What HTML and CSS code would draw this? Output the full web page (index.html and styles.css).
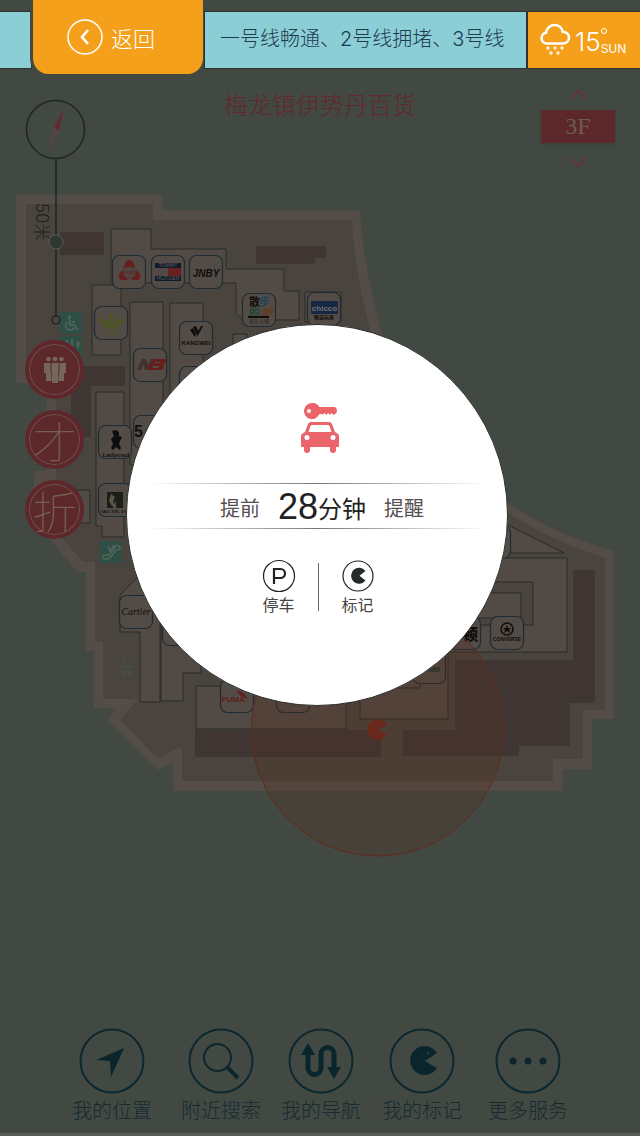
FILE: index.html
```html
<!DOCTYPE html>
<html lang="zh-CN">

<head>
    <meta charset="UTF-8" />
    <meta name="viewport" content="width=device-width, initial-scale=1.0" />
    <title>梅龙镇伊势丹百货</title>
    <link rel="stylesheet" href="styles.css">
</head>

<body>
    <header class="topbar">
        <span class="topbar-edge"></span>
        <button class="back" type="button">
            <svg width="38" height="38" viewBox="0 0 38 38" fill="none" stroke="#fff">
                <circle cx="19" cy="19" r="17" stroke-width="1.5" />
                <path d="M22 12l-6 7 6 7" stroke-width="2.6" />
            </svg>
            返回
        </button>
        <div class="ticker">一号线畅通、2号线拥堵、3号线</div>
        <div class="weather">
            <svg width="32" height="34" viewBox="0 0 32 34" fill="none" stroke="#fff">
                <path d="M8 20.500a5.500 5.500 0 0 1-1-10.900C8 5 11.500 2 15.500 2c4 0 7.500 2.600 8.200 6.600 3.600.2 6.300 2.700 6.300 6 0 3.400-2.700 5.900-6 5.900z" stroke-width="2.600" />
                <path d="M9 23v4M7 25h4M16 23v4M14 25h4M23 23v4M21 25h4M12 28v4M10 30h4M19 28v4M17 30h4" stroke-width="1.200" />
            </svg>
            <span class="temp">15</span>
            <span class="unit"><span class="degree"></span>SUN</span>
        </div>
    </header>

    <main class="stage">
        <svg class="map" viewBox="0 80 640 870">
            <defs>
                <rect id="tile" x="-16.500" y="-16.500" width="33" height="33" rx="7" />
            </defs>

            <!-- building -->
            <path class="wall" d="M16 195H162V210L360 211Q364 270 382 333L508 503Q560 537 614 551V719H592V769H563V791H173V762L158 770 107 720 116 708H94V651H86V572H77L34 520V471H47V383H16z" />
            <path class="floor" d="M26 204H153V220H352Q355 275 371 333L508 513Q550 540 605 558V710H583V759H553V781H182V746L158 759 120 720 138 699H103V642H95V562H83L52 526V480H56V374H26z" />

            <g class="block">
                <path d="M60 232h44v23H60z" />
                <path d="M256 246h70v12h-11v6h-59z" />
                <path d="M71 366h54v20H91v51H71z" />
                <path d="M573 570h22v133h-25v43h-51v10H403v-26h52v-70h118z" />
                <path d="M195 730h186v27H195z" />
            </g>

            <g class="room">
                <path d="M111 229h40v20h75v20h58v22h15v29h-56l-7-7v-30H111z" />
                <path d="M92 285h29v70H92z" />
                <path d="M130 302h33v163h-33z" />
                <path d="M170 303h33v130h-33z" />
                <path d="M305 292h36v30h-36z" />
                <path d="M233 334h14v20h-14z" />
                <path d="M96 392h28v145h-22v-11h-6z" />
                <path d="M66 490h24v33H66z" />
                <path d="M120 595l40-40v147h-20v-70h-20z" />
                <path d="M161 600h40v73h-18v28h-22z" />
                <path d="M196 686h150v43H196z" />
                <path d="M360 650h88v69h-88z" />
                <path d="M500 521l64 32h-64z" />
                <path d="M460 558h107v94H440z" />
                <path class="floor" d="M478 582h55v43h-63z" />
                <path d="M470 593h51v25h-51z" />
                <path d="M370 680h50v8h-50z" />
            </g>

            <!-- service points -->
            <g class="service">
                <rect x="60" y="312" width="22" height="22" rx="3" />
                <rect x="60" y="336" width="22" height="22" rx="3" />
                <rect x="100" y="541" width="22" height="22" rx="3" />
            </g>
            <g class="service-mark">
                <circle cx="69.500" cy="317" r="1" />
                <path d="M69.500 319v6h5l3 5M71 322h4M67.500 322a4.500 4.500 0 1 0 6.500 6" />
                <path d="M67 340v6M72 339v16M78 341v7M76 344h4" />
                <path d="M104 559c-2-2-1-4 1-4h4l6-8c1-2 5-2 5 1 0 2-2 2-4 2l-6 8c-1 1-4 1-6 1zM108 546l2 5 4-6" />
            </g>
            <g class="restroom">
                <circle cx="124" cy="661" r="2" />
                <circle cx="131" cy="661" r="2" />
                <path d="M120 665h14v3h-14zM121 670h5v6h-5zM128 670h5v6h-5z" />
            </g>

            <!-- shops -->
            <g class="tiles">
                <use href="#tile" x="129" y="272" />
                <use href="#tile" x="168" y="272" />
                <use href="#tile" x="206" y="272" />
                <use href="#tile" x="111" y="323" />
                <use href="#tile" x="150" y="365" />
                <use href="#tile" x="196" y="338" />
                <use href="#tile" x="196" y="383" />
                <use href="#tile" x="259" y="310" />
                <use href="#tile" x="324" y="309" />
                <use href="#tile" x="115" y="442" />
                <use href="#tile" x="150" y="432" />
                <use href="#tile" x="115" y="500" />
                <use href="#tile" x="136" y="612" />
                <use href="#tile" x="179" y="629" />
                <use href="#tile" x="237" y="696" />
                <use href="#tile" x="293" y="696" />
                <use href="#tile" x="429" y="667" />
                <use href="#tile" x="464" y="633" />
                <use href="#tile" x="507" y="633" />
                <use href="#tile" x="494" y="542" />
            </g>

            <g class="logo-red">
                <path d="M129.500 260c4 0 5 5 6 9 4 4 6 7 4 10-2 2-6 1-10 0-4 1-8 2-10 0-2-3 0-6 4-10 1-4 2-9 6-9z" />
            </g>
            <path class="logo-cut" d="M122 269q7.500-4 15 0-1 8-7.500 10-6.500-2-7.500-10z" />
            <text class="tiny red" x="129.500" y="274">kappa</text>

            <path fill="#101a2c" d="M155 263h26v5h-26zM155 276h26v5h-26z" />
            <path fill="#524a46" d="M155 268h13v8h-13z" />
            <path fill="#68211e" d="M168 268h13v8h-13z" />
            <text class="tiny pale" x="168" y="267">TOMMY</text>
            <text class="tiny pale" x="168" y="280">HILFIGER</text>

            <text class="logo-hand" x="206" y="277">JNBY</text>

            <g fill="#4f5725">
                <path d="M111 313q5 6 0 13-5-7 0-13zM98 318q9 0 11 9-8 0-11-9zM124 318q-9 0-11 9 8 0 11-9z" />
                <path d="M103 324h16l-1 2h-14zM104 327h14l-1 1h-12zM105 329h12l-1 1h-10z" />
            </g>
            <text class="tiny olive" x="111" y="334">adidas</text>

            <path fill="#46302d" d="M137 370l5-11h4l2 6 3-6h3l-5 11h-4l-2-6-2 6z" />
            <path fill="#681f1c" d="M148 370l5-11h11q3 1 2 3-1 2-3 2 2 2 1 3-1 3-4 3zM155 362l-1 1h6v-1zM153 366l-1 2h7v-2z" />

            <path fill="#100e0d" d="M190 330l3-2 3 6-1 3zM193 327l3-1 2 5-1 4zM197 333l4-7h2l-6 11z" />
            <text class="small" x="196" y="345">KANGWEI</text>

            <text class="shop-cn" x="249" y="306">散</text>
            <text class="shop-cn blue" x="259" y="306">步</text>
            <text class="shop-cn green" x="249" y="317">的</text>
            <path fill="#5d3f2b" d="M261 316l3-8q5 2 8-3l2 6q-3 5-7 3l-1 3z" />
            <path fill="#100e0d" d="M248 316h21v2h-21z" />
            <text class="tiny" x="259" y="323">其乐小铺</text>

            <path fill="#152743" d="M311 301h27v13h-27z" />
            <text class="chicco" x="324.500" y="311">chicco</text>
            <text class="tiny bold" x="324" y="319">智高玩具</text>

            <path fill="#100e0d" d="M112 431l4-1 3 2v4l3 1-2 4-1 3 2 4-1 2-4-3-3 3-2-2 2-4-2-5 3-3z" />
            <text class="tiny bold wide" x="116" y="457">Ladysoul</text>
            <text class="five" x="134" y="437">5</text>

            <path fill="#1c1f17" d="M107 492h16v16h-7v-8l-3 8h-6z" />
            <path fill="#5c574c" d="M111 494l4 3-2 5 4 5-5-1-3-5z" />
            <text class="tiny bold serif" x="116" y="513">ARCTIC FOX</text>

            <text class="cartier" x="136" y="615">Cartier</text>

            <text class="puma" x="233" y="702">PUMA</text>
            <path fill="#621e1a" d="M236 691q6 0 8 3l4 5-7-3z" />

            <text class="shop-bold" x="470" y="640">顿</text>
            <path fill="#2d3c38" d="M428 667h12v5h-12z" />
            <circle cx="507" cy="629" r="6" fill="none" stroke="#100e0d" stroke-width="1.500" />
            <path fill="#100e0d" d="M507 625l1 3h3l-2 2 1 3-3-2-3 2 1-3-2-2h3z" />
            <text class="tiny bold" x="507" y="641">CONVERSE</text>

            <!-- current position -->
            <circle class="range" cx="377.500" cy="730" r="126" />
            <path fill="#6b291e" d="M387 724a10.500 10.500 0 1 0 0 11l-8-5z" />

            <!-- compass and scale -->
            <g class="compass">
                <circle cx="55.500" cy="129.500" r="29" />
                <path d="M56 159v157" />
                <circle cx="56" cy="320" r="4" />
            </g>
            <path fill="#6a282e" d="M64 108l-5 22-5-2z" />
            <path fill="#5a4244" d="M48 152l6-24 5 2z" />
            <circle cx="56" cy="242" r="7" fill="#303632" stroke="#5d5b55" />
            <text class="scale-text" transform="translate(36 203) rotate(90)">50米</text>
        </svg>

        <h1 class="mall">梅龙镇伊势丹百货</h1>

        <div class="floors">
            <button class="step" type="button" aria-label="上一层">
                <svg width="18" height="10" viewBox="0 0 18 10"><path d="M1 9l8-8 8 8" /></svg>
            </button>
            <span class="current">3F</span>
            <button class="step" type="button" aria-label="下一层">
                <svg width="18" height="10" viewBox="0 0 18 10"><path d="M1 1l8 8 8-8" /></svg>
            </button>
        </div>

        <div class="side">
            <button class="round people" type="button" aria-label="人群">
                <svg width="24" height="28" viewBox="0 0 24 28">
                    <circle cx="5.500" cy="3" r="2.300" />
                    <circle cx="18.500" cy="3" r="2.300" />
                    <circle cx="12" cy="3" r="2.300" />
                    <path d="M1 7h6.500v10l1 2v6H3v-8H1zM16.500 7H23v10h-2v8h-5.500v-6l1-2zM8.500 7h7v10H15v10H9V17h-.5z" />
                </svg>
            </button>
            <button class="round" type="button">才</button>
            <button class="round" type="button">折</button>
        </div>

        <section class="dialog" role="dialog" aria-label="停车提醒">
            <svg class="car" width="38" height="50" viewBox="0 0 38 50">
                <path fill-rule="evenodd" d="M11 0a8 8 0 0 1 7.400 4H34q2 1 2 3.500T34 11l-1.500 1-2-2-1.500 2-2-2-1.500 2-2-2-1.500 1.500-2-.5h-1.600A8 8 0 1 1 11 0zM8 6a2 2 0 1 0 0 4 2 2 0 0 0 0-4z" />
                <path fill-rule="evenodd" d="M10 19h18q2 0 3 2l3 8q4 2 4 4v11h-3v3q0 3-3 3t-3-3v-3H9v3q0 3-3 3t-3-3v-3H0V33q0-2 4-4l3-8q1-2 3-2zm1 3q-1 0-1.500 1L7.500 29h23l-2-6q-.5-1-1.500-1zM6 32a2.500 2.500 0 1 0 0 5 2.500 2.500 0 0 0 0-5zm26 0a2.500 2.500 0 1 0 0 5 2.500 2.500 0 0 0 0-5z" />
            </svg>
            <p class="remind">
                <span>提前</span>
                <strong><span class="minutes">28</span>分钟</strong>
                <span>提醒</span>
            </p>
            <div class="choices">
                <button class="choice" type="button">
                    <svg width="34" height="34" viewBox="0 0 34 34" fill="none" stroke="#222">
                        <circle cx="17" cy="17" r="15.500" stroke-width="1.200" />
                        <path d="M12 25V10h6.500a4.500 4.500 0 0 1 0 9H12" stroke-width="2.200" />
                    </svg>
                    停车
                </button>
                <span class="divider"></span>
                <button class="choice" type="button">
                    <svg width="34" height="34" viewBox="0 0 34 34">
                        <circle cx="17" cy="17" r="15" fill="none" stroke="#222" stroke-width="1.200" />
                        <path fill="#262a2a" d="M24.500 12a8 8 0 1 0 0 9.500l-6-4.700z" />
                    </svg>
                    标记
                </button>
            </div>
        </section>
    </main>

    <nav class="tabs">
        <a class="tab" href="#location">
            <svg viewBox="0 0 66 66">
                <circle class="ring" cx="33" cy="33" r="31.500" />
                <path d="M45 20L32 49l-1-16-14-1z" />
            </svg>
            我的位置
        </a>
        <a class="tab" href="#search">
            <svg viewBox="0 0 66 66">
                <circle class="ring" cx="33" cy="33" r="31.500" />
                <circle class="ring" cx="29.500" cy="29.500" r="13.500" />
                <path class="ring thick" d="M39 39l11 11" />
            </svg>
            附近搜索
        </a>
        <a class="tab" href="#route">
            <svg viewBox="0 0 66 66">
                <circle class="ring" cx="33" cy="33" r="31.500" />
                <path class="route" d="M20 24v16a6.500 6.500 0 0 0 13 0V26a6.500 6.500 0 0 1 13 0v16" />
                <path d="M13 27l7-12 7 12zM39 39h14l-7 12z" />
            </svg>
            我的导航
        </a>
        <a class="tab" href="#marks">
            <svg viewBox="0 0 66 66">
                <circle class="ring" cx="33" cy="33" r="31.500" />
                <path fill-rule="evenodd" d="M48 25a14.500 14.500 0 1 0 0 15l-12-7zM39 24a1 1 0 1 0 0 2 1 1 0 0 0 0-2z" />
            </svg>
            我的标记
        </a>
        <a class="tab" href="#more">
            <svg viewBox="0 0 66 66">
                <circle class="ring" cx="33" cy="33" r="31.500" />
                <circle cx="18" cy="33" r="3.500" />
                <circle cx="33" cy="33" r="3.500" />
                <circle cx="48" cy="33" r="3.500" />
            </svg>
            更多服务
        </a>
    </nav>
</body>

</html>
```
FILE: styles.css
```css
* {
    box-sizing: border-box;
}

body {
    display: flex;
    flex-direction: column;
    min-height: 100vh;
    margin: 0;
    background: #424942;
    font-family: "Noto Sans CJK SC", sans-serif;
    font-weight: 300;
}

button {
    padding: 0;
    border: 0;
    background: none;
    color: inherit;
    font: inherit;
    cursor: pointer;
}

/* top bar */
.topbar {
    display: flex;
    align-items: flex-start;
    height: 80px;
}

.topbar-edge,
.ticker,
.weather {
    height: 58px;
    margin-top: 11px;
    border: 1px solid #2c3330;
    background: #8bced6;
}

.topbar-edge {
    width: 32px;
    border-left: 0;
}

.back {
    display: flex;
    align-items: center;
    gap: 7px;
    width: 176px;
    height: 76px;
    margin: 0 -2px;
    padding-left: 33px;
    border: solid #424942;
    border-width: 0 3px 2px;
    border-radius: 0 0 18px 18px;
    background: #f4a01b;
    color: #fff;
    font-size: 22px;
}

.ticker {
    flex: 1;
    padding-left: 15px;
    color: #1d3a50;
    font-family: Inter, "Noto Sans CJK SC", sans-serif;
    font-size: 20px;
    line-height: 54px;
    white-space: nowrap;
    overflow: hidden;
}

.weather {
    display: flex;
    align-items: center;
    gap: 4px;
    width: 113px;
    padding-left: 11px;
    border-right: 0;
    background: #f4a01b;
    color: #fff;
}

.temp {
    padding-top: 4px;
    font: 300 26px/32px Inter, sans-serif;
}

.unit {
    display: flex;
    flex-direction: column;
    gap: 8px;
    margin-left: -4px;
    padding-top: 4px;
    font: 12px/14px Inter, sans-serif;
}

.degree {
    width: 6px;
    height: 6px;
    border: 1px solid #fff;
    border-radius: 50%;
}

/* map */
.stage {
    display: grid;
    position: relative;
}

.stage > * {
    grid-area: 1 / 1;
}

.map {
    display: block;
    width: 100%;
}

.wall {
    fill: #544c47;
}

.floor,
.room .floor {
    fill: #49443e;
}

.block {
    fill: #3f3634;
}

.room {
    fill: #524a45;
    stroke: #2b2a26;
    stroke-width: 1;
}

.service {
    fill: #2d4f45;
}

.service-mark {
    fill: none;
    stroke: #55675d;
    stroke-width: 1.5;
}

.restroom {
    fill: #474b45;
}

.tiles {
    fill: #534b46;
    stroke: #1f2c34;
    stroke-width: 1.2;
}

.logo-red {
    fill: #651f1f;
}

.logo-cut {
    fill: #4e4642;
}

.map text {
    fill: #100e0d;
    text-anchor: middle;
    font-family: "Liberation Sans", "Noto Sans CJK SC", sans-serif;
}

.map .tiny {
    font-size: 5px;
}

.map .small {
    font-size: 6px;
    font-weight: 700;
}

.map .bold {
    font-weight: 700;
}

.map .wide {
    font-size: 6px;
}

.map .serif {
    font-family: "Liberation Serif", serif;
}

.map .red {
    fill: #651f1f;
}

.map .pale {
    fill: #665f5a;
}

.map .olive {
    fill: #4f5725;
}

.map .logo-hand {
    font-size: 10px;
    font-weight: 700;
    font-style: italic;
}

.map .shop-cn {
    text-anchor: start;
    font-size: 11px;
    font-weight: 700;
}

.map .blue {
    fill: #234257;
}

.map .green {
    fill: #24432f;
}

.map .chicco {
    fill: #777371;
    font-size: 8px;
    font-weight: 700;
}

.map .five {
    text-anchor: start;
    font-size: 16px;
    font-weight: 700;
}

.map .cartier {
    font: italic 10px "Liberation Serif", serif;
}

.map .puma {
    fill: #621e1a;
    font-size: 8px;
    font-weight: 700;
}

.map .shop-bold {
    font-size: 16px;
    font-weight: 900;
}

.range {
    fill: rgba(88, 43, 25, 0.25);
    stroke: #64281d;
}

.compass {
    fill: none;
    stroke: #202622;
    stroke-width: 1.6;
}

.map .scale-text {
    fill: #211f1c;
    text-anchor: start;
    font: 300 17px Inter, "Noto Sans CJK SC", sans-serif;
}

.mall {
    justify-self: center;
    align-self: start;
    margin: 6px 0 0;
    color: #63272d;
    font-size: 24px;
    font-weight: 300;
    line-height: 36px;
}

.floors {
    display: flex;
    flex-direction: column;
    justify-self: end;
    align-self: start;
    align-items: center;
    gap: 10px;
    margin: 10px 25px 0 0;
}

.step {
    display: flex;
}

.step path {
    fill: none;
    stroke: #702c35;
    stroke-width: 1.5;
}

.current {
    width: 74px;
    background: #5d282b;
    box-shadow: 0 2px 4px rgba(0, 0, 0, 0.12);
    color: #6b5c52;
    font: 24px/33px "Liberation Serif", serif;
    text-align: center;
}

.step:last-child {
    margin-top: 4px;
}

.side {
    display: flex;
    flex-direction: column;
    justify-self: start;
    align-self: start;
    gap: 11px;
    margin: 260px 0 0 25px;
}

.round {
    width: 59px;
    height: 59px;
    border: 4px solid #5f272c;
    border-radius: 50%;
    background: #5c282b;
    box-shadow: inset 0 0 0 1px #6e594d;
    color: #75604f;
    font-size: 44px;
    font-weight: 100;
    line-height: 50px;
}

.people {
    line-height: 0;
}

.people svg {
    fill: #75665c;
}

/* reminder dialog */
.dialog {
    display: flex;
    flex-direction: column;
    place-self: center;
    align-items: center;
    width: 382px;
    height: 382px;
    margin-right: 6px;
    padding-top: 78px;
    border: 1px solid #2b302c;
    border-radius: 50%;
    background: #fff;
    color: #555050;
}

.car {
    margin-left: 6px;
    fill: #ea6469;
}

.remind {
    display: flex;
    justify-content: center;
    align-items: center;
    gap: 18px;
    width: 340px;
    height: 46px;
    margin: 30px 0 0;
    padding: 2px 0 0 10px;
    background:
        linear-gradient(90deg, #fff, #777, #fff) top / 100% 1px no-repeat,
        linear-gradient(90deg, #fff, #777, #fff) bottom / 100% 1px no-repeat;
    font-size: 20px;
    font-weight: 400;
}

.remind strong {
    display: flex;
    align-items: center;
    color: #222;
    font-size: 24px;
    font-weight: 400;
}

.minutes {
    font-family: "Liberation Sans", sans-serif;
    font-size: 36px;
    line-height: 40px;
}

.choices {
    display: flex;
    align-items: center;
    margin-top: 30px;
    padding-left: 2px;
}

.choice {
    display: flex;
    flex-direction: column;
    align-items: center;
    width: 78px;
    color: #444;
    font-size: 16px;
    font-weight: 400;
    line-height: 22px;
}

.divider {
    width: 1px;
    height: 48px;
    background: #666;
}

/* bottom tabs */
.tabs {
    display: grid;
    flex: 1;
    grid-template-columns: 112fr 106fr 94fr 108fr 104fr;
    align-items: end;
    padding: 0 60px 7px 56px;
    border-bottom: 3px solid #595b57;
}

.tab {
    display: flex;
    flex-direction: column;
    align-items: center;
    color: #172a32;
    font-size: 20px;
    line-height: 32px;
    text-decoration: none;
    white-space: nowrap;
}

.tab svg {
    width: 66px;
    fill: #0b252d;
}

.tab .ring {
    fill: none;
    stroke: #0d272f;
    stroke-width: 2;
}

.tab .thick {
    stroke-width: 4;
}

.tab .route {
    fill: none;
    stroke: #0b252d;
    stroke-width: 5;
}
```
